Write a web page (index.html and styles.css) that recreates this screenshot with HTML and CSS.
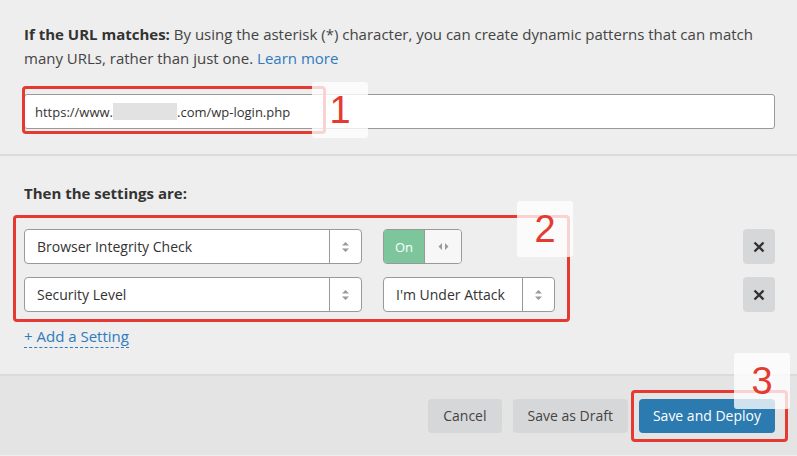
FILE: index.html
```html
<!DOCTYPE html>
<html lang="en">
<head>
    <meta charset="UTF-8">
    <title>Page Rule</title>
    <link rel="stylesheet" href="styles.css">
</head>
<body>
    <div class="panel">
        <div class="section url-section">
            <p class="help"><strong>If the URL matches:</strong> By using the asterisk (*) character, you can create dynamic patterns that can match many URLs, rather than just one. <a href="#">Learn more</a></p>
            <div class="url-input">
                <span>https://www.</span><span class="blur"></span><span>.com/wp-login.php</span>
            </div>
        </div>

        <div class="section settings-section">
            <h3>Then the settings are:</h3>
            <div class="setting-row">
                <div class="select wide">
                    <span class="value">Browser Integrity Check</span>
                    <span class="arrows"><svg width="9" height="12" viewBox="0 0 9 12"><path d="M4.5 1 L8 4.5 H1 Z M4.5 11 L8 7.5 H1 Z" fill="#999"/></svg></span>
                </div>
                <div class="toggle">
                    <span class="on">On</span>
                    <span class="handle"><svg width="11" height="9" viewBox="0 0 11 9"><path d="M0.5 4.5 L4 1 V8 Z M10.5 4.5 L7 1 V8 Z" fill="#999"/></svg></span>
                </div>
                <button class="remove"><svg width="12" height="12" viewBox="0 0 12 12"><path d="M1.5 1.5 L10.5 10.5 M10.5 1.5 L1.5 10.5" stroke="#333" stroke-width="2.4"/></svg></button>
            </div>
            <div class="setting-row">
                <div class="select wide">
                    <span class="value">Security Level</span>
                    <span class="arrows"><svg width="9" height="12" viewBox="0 0 9 12"><path d="M4.5 1 L8 4.5 H1 Z M4.5 11 L8 7.5 H1 Z" fill="#999"/></svg></span>
                </div>
                <div class="select narrow">
                    <span class="value">I'm Under Attack</span>
                    <span class="arrows"><svg width="9" height="12" viewBox="0 0 9 12"><path d="M4.5 1 L8 4.5 H1 Z M4.5 11 L8 7.5 H1 Z" fill="#999"/></svg></span>
                </div>
                <button class="remove"><svg width="12" height="12" viewBox="0 0 12 12"><path d="M1.5 1.5 L10.5 10.5 M10.5 1.5 L1.5 10.5" stroke="#333" stroke-width="2.4"/></svg></button>
            </div>
            <a class="add-setting" href="#">+ Add a Setting</a>
        </div>

        <div class="footer">
            <button class="btn">Cancel</button>
            <button class="btn">Save as Draft</button>
            <button class="btn primary">Save and Deploy</button>
        </div>
    </div>

    <!-- screenshot annotations -->
    <div class="mark box1"></div>
    <div class="mark box2"></div>
    <div class="mark box3"></div>
    <div class="label label1">1</div>
    <div class="label label2">2</div>
    <div class="label label3">3</div>
</body>
</html>
```

FILE: styles.css
```css
body {
    margin: 0;
    font-family: "Open Sans", Arial, sans-serif;
    color: #333;
    background-color: #edeeed;
    position: relative;
    width: 797px;
    height: 456px;
    overflow: hidden;
}

a {
    color: #2f7bbf;
    text-decoration: none;
}

.section {
    padding: 0 22px 0 24px;
    border-bottom: 2px solid #dadbdb;
}

.url-section {
    padding-top: 22px;
    padding-bottom: 25px;
}

.help {
    margin: 0 0 24px;
    font-size: 15px;
    line-height: 24px;
    color: #444;
}

.help strong {
    color: #333;
}

.url-input {
    height: 35px;
    box-sizing: border-box;
    border: 1px solid #999;
    border-radius: 3px;
    background: #fff;
    display: flex;
    align-items: center;
    padding-left: 10px;
    font-size: 13px;
    color: #333;
}

.blur {
    display: inline-block;
    width: 64px;
    height: 17px;
    background: #e2e2e2;
}

.settings-section {
    padding-top: 25px;
    padding-bottom: 26px;
}

.settings-section h3 {
    margin: 0 0 24px;
    font-size: 15px;
    line-height: 24px;
    font-weight: bold;
}

.setting-row {
    display: flex;
    align-items: center;
    margin-bottom: 13px;
}

.select {
    height: 35px;
    box-sizing: border-box;
    border: 1px solid #999;
    border-radius: 4px;
    background: #fff;
    display: flex;
    font-size: 14px;
    color: #333;
}

.select.wide {
    width: 338px;
}

.select.narrow {
    width: 172px;
    margin-left: 21px;
}

.select .value {
    flex: 1;
    display: flex;
    align-items: center;
    padding-left: 12px;
}

.select .arrows {
    width: 31px;
    border-left: 1px solid #999;
    display: flex;
    align-items: center;
    justify-content: center;
}

.toggle {
    width: 79px;
    height: 35px;
    box-sizing: border-box;
    margin-left: 21px;
    border: 1px solid #999;
    border-radius: 4px;
    overflow: hidden;
    display: flex;
    font-size: 13px;
}

.toggle .on {
    width: 40px;
    background: #7dc69c;
    color: #fff;
    display: flex;
    align-items: center;
    justify-content: center;
    border-right: 1px solid #999;
}

.toggle .handle {
    flex: 1;
    background: #f7f7f7;
    display: flex;
    align-items: center;
    justify-content: center;
}

.remove {
    margin-left: auto;
    width: 32px;
    height: 35px;
    border: none;
    border-radius: 4px;
    background: #d6d7d8;
    display: flex;
    align-items: center;
    justify-content: center;
    padding: 0;
}

.add-setting {
    display: inline-block;
    margin-top: -2px;
    font-size: 15px;
    line-height: 22px;
    border-bottom: 1px dashed #2f7bbf;
}

.footer {
    background: #e4e4e4;
    height: 79px;
    display: flex;
    justify-content: flex-end;
    align-items: center;
    gap: 11px;
    padding-right: 22px;
}

.btn {
    height: 34px;
    border: none;
    border-radius: 4px;
    background: #d6d7d8;
    color: #444;
    font-family: "Open Sans", Arial, sans-serif;
    font-size: 14px;
    padding: 0 15px;
}

.btn.primary {
    background: #2c7bb0;
    color: #fff;
    padding: 0 14px;
}

.mark {
    position: absolute;
    border: 3px solid #e53a31;
    border-radius: 4px;
    box-sizing: border-box;
}

.box1 { left: 22px; top: 86px; width: 304px; height: 48px; }
.box2 { left: 13px; top: 215px; width: 557px; height: 107px; }
.box3 { left: 631px; top: 390px; width: 157px; height: 52px; }

.label {
    position: absolute;
    width: 56px;
    height: 56px;
    background: rgba(255, 255, 255, 0.78);
    border-radius: 3px;
    color: #e53a31;
    font-family: "Liberation Sans", Arial, sans-serif;
    font-size: 38px;
    line-height: 56px;
    text-align: center;
}

.label1 { left: 312px; top: 82px; }
.label2 { left: 517px; top: 201px; }
.label3 { left: 734px; top: 353px; }
```
